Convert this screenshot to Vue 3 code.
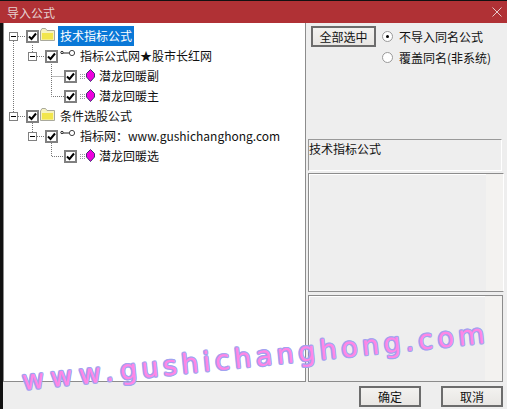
<template>
  <div class="win">
    <div class="titlebar">
      <span class="title">导入公式</span>
      <svg class="close" width="10" height="10" viewBox="0 0 10 10"><path d="M0.5 0.5L9.5 9.5M9.5 0.5L0.5 9.5" stroke="#e6c9ca" stroke-width="1" fill="none" /></svg>
    </div>
    <div class="body">
      <div class="main">
        <div class="tree">
          <svg class="lines" width="200" height="160" viewBox="4 23 200 160">
            <path d="M13.5 41V112M18 36.5H26M32.5 45V52M37 56.5H45M51.5 64V96.5H64M51.5 76.5H64M18 116.5H26M32.5 123V132M37 136.5H45M51.5 143V156.5H64" stroke="#777" stroke-dasharray="1 1" fill="none" />
          </svg>
          <div v-for="row in rows" :key="row.text" class="row" :class="'lvl' + row.level">
            <span v-if="row.level < 3" class="expander"></span>
            <span class="check">
              <svg width="9" height="9" viewBox="0 0 9 9"><path d="M1 4.5L3.5 7L8 1.5" stroke="#000" stroke-width="2" fill="none" /></svg>
            </span>
            <svg v-if="row.level === 1" class="folder" width="15" height="13" viewBox="0 0 15 13">
              <path d="M0.5 3L2 0.5H5.5L7 2.5H14.5V12.5H0.5Z" fill="#f6f2c0" stroke="#a9a99c" />
              <path d="M2 5H13V11.5H2Z" fill="#f2e64c" />
            </svg>
            <svg v-if="row.level === 2" class="key" width="16" height="8" viewBox="0 0 16 8">
              <circle cx="12" cy="4" r="2.6" fill="#fff" stroke="#444" />
              <path d="M9 4H3" stroke="#222" fill="none" />
              <circle cx="2" cy="3.5" r="1.2" fill="#fff" stroke="#222" />
            </svg>
            <svg v-if="row.level === 3" class="gem" width="18" height="13" viewBox="0 0 18 13">
              <path d="M0 5.5H5M0 7.5H5M0 9.5H5" stroke="#999" stroke-dasharray="1 1" fill="none" />
              <path d="M10.5 0.5L14.5 4.5V8L10.5 12.5L6.5 8V4.5Z" fill="#ee00dd" stroke="#403070" />
            </svg>
            <span class="label" :class="{ selected: row.selected }">{{ row.text }}</span>
          </div>
        </div>
        <div class="side">
          <div class="options">
            <button class="btn select-all">全部选中</button>
            <div class="radios">
              <div class="radio-row"><span class="radio on"></span>不导入同名公式</div>
              <div class="radio-row"><span class="radio"></span>覆盖同名(非系统)</div>
            </div>
          </div>
          <div class="name-box">技术指标公式</div>
          <div class="pane pane-mid"><div class="pane-strip"></div></div>
          <div class="pane pane-low"><div class="pane-strip"></div></div>
        </div>
      </div>
      <div class="footer">
        <button class="btn foot-btn">确定</button>
        <button class="btn foot-btn">取消</button>
      </div>
    </div>
    <div class="watermark"><span class="wm-lead">www.</span>gushichanghong.com</div>
  </div>
</template>

<script setup>
const rows = [
  { level: 1, text: '技术指标公式', selected: true },
  { level: 2, text: '指标公式网★股市长红网' },
  { level: 3, text: '潜龙回暖副' },
  { level: 3, text: '潜龙回暖主' },
  { level: 1, text: '条件选股公式' },
  { level: 2, text: '指标网：www.gushichanghong.com' },
  { level: 3, text: '潜龙回暖选' }
]
</script>

<style>
body {
  background: #111;
  overflow: hidden;
}
</style>

<style scoped>
.win {
  position: relative;
  width: 507px;
  height: 409px;
  overflow: hidden;
  background: #111;
  font-family: "Noto Sans CJK SC", "Liberation Sans", sans-serif;
  font-size: 12px;
  color: #111;
}

.titlebar {
  display: flex;
  align-items: center;
  justify-content: space-between;
  height: 22px;
  margin-top: 1px;
  padding: 0 5px 0 7px;
  background: #b03135;
  color: #e6d2d2;
}

.body {
  margin-left: 3px;
  height: 386px;
  background: #eeeeee;
}

.main {
  display: flex;
  height: 359px;
}

.tree {
  position: relative;
  width: 301px;
  padding-top: 3px;
  background: #fff;
  border: 1px solid #8c8c8c;
  border-top: none;
}

.lines {
  position: absolute;
  left: 0;
  top: 0;
}

.row {
  position: relative;
  display: flex;
  align-items: center;
  height: 20px;
  white-space: nowrap;
}

.lvl1 { padding-left: 5px; }
.lvl2 { padding-left: 24px; }
.lvl3 { padding-left: 60px; }

.expander {
  position: relative;
  width: 9px;
  height: 9px;
  margin-right: 8px;
  box-sizing: border-box;
  border: 1px solid #808080;
  background: #fff;
}

.expander::after {
  content: "";
  position: absolute;
  left: 1px;
  top: 3px;
  width: 5px;
  height: 1px;
  background: #000;
}

.check {
  display: flex;
  align-items: center;
  justify-content: center;
  width: 13px;
  height: 13px;
  box-sizing: border-box;
  border: 2px solid #808080;
  background: #fff;
}

.folder { margin-left: 1px; margin-top: -4px; }
.key { margin-left: 2px; margin-top: -6px; }
.gem { margin-left: 3px; margin-top: -2px; }

.label {
  line-height: 20px;
  padding: 0 2px;
}

.lvl1 .label { margin-left: 3px; }
.lvl2 .label { margin-left: 2px; }
.lvl3 .label { margin-left: -1px; }

.selected {
  background: #0a78d7;
  color: #fff;
}

.side {
  flex: 1;
  padding-left: 2px;
}

.options {
  display: flex;
  height: 116px;
  padding: 3px 0 0 3px;
  box-sizing: border-box;
}

.btn {
  font: inherit;
  color: #111;
  background: linear-gradient(#f3f2f0, #e8e6e3);
  border: 2px solid #6c6c6c;
  padding: 0;
}

.select-all {
  width: 65px;
  height: 21px;
}

.radios {
  margin-left: 6px;
}

.radio-row {
  display: flex;
  align-items: center;
  height: 21px;
}

.radio {
  position: relative;
  width: 11px;
  height: 11px;
  margin-right: 6px;
  box-sizing: border-box;
  border: 1px solid #999;
  border-radius: 50%;
  background: #fff;
}

.radio.on::after {
  content: "";
  position: absolute;
  left: 3px;
  top: 3px;
  width: 3px;
  height: 3px;
  border-radius: 50%;
  background: #000;
}

.name-box {
  width: 194px;
  height: 32px;
  box-sizing: border-box;
  border-top: 1px solid #999;
  border-left: 1px solid #999;
  border-bottom: 1px solid #fff;
  border-right: 1px solid #fff;
  line-height: 18px;
}

.pane {
  display: flex;
  justify-content: flex-end;
  box-sizing: border-box;
  border: 1px solid #8c8c8c;
  border-right-color: #fff;
  box-shadow: inset 1px 1px 0 #fff;
}

.pane-mid {
  width: 196px;
  height: 119px;
  margin-top: 2px;
}

.pane-low {
  width: 195px;
  height: 87px;
  margin-top: 3px;
  border-right-color: #8c8c8c;
}

.pane-strip {
  width: 17px;
  background: #f3f2f0;
}

.footer {
  display: flex;
  justify-content: flex-end;
  gap: 20px;
  padding: 4px 4px 0 0;
}

.foot-btn {
  width: 62px;
  height: 21px;
}

.watermark {
  position: absolute;
  left: 22px;
  top: 363px;
  transform: rotate(-5.8deg);
  transform-origin: 0 50%;
  font-family: "DejaVu Sans", sans-serif;
  font-size: 27px;
  line-height: 36px;
  letter-spacing: 4.5px;
  white-space: nowrap;
  color: #ff86e6;
  text-shadow:
    1.2px 0 0 #a3a3f0, -1.2px 0 0 #a3a3f0, 0 1.2px 0 #a3a3f0, 0 -1.2px 0 #a3a3f0,
    0.9px 0.9px 0 #a3a3f0, -0.9px 0.9px 0 #a3a3f0, 0.9px -0.9px 0 #a3a3f0, -0.9px -0.9px 0 #a3a3f0;
}

.wm-lead {
  letter-spacing: 6.5px;
}
</style>
